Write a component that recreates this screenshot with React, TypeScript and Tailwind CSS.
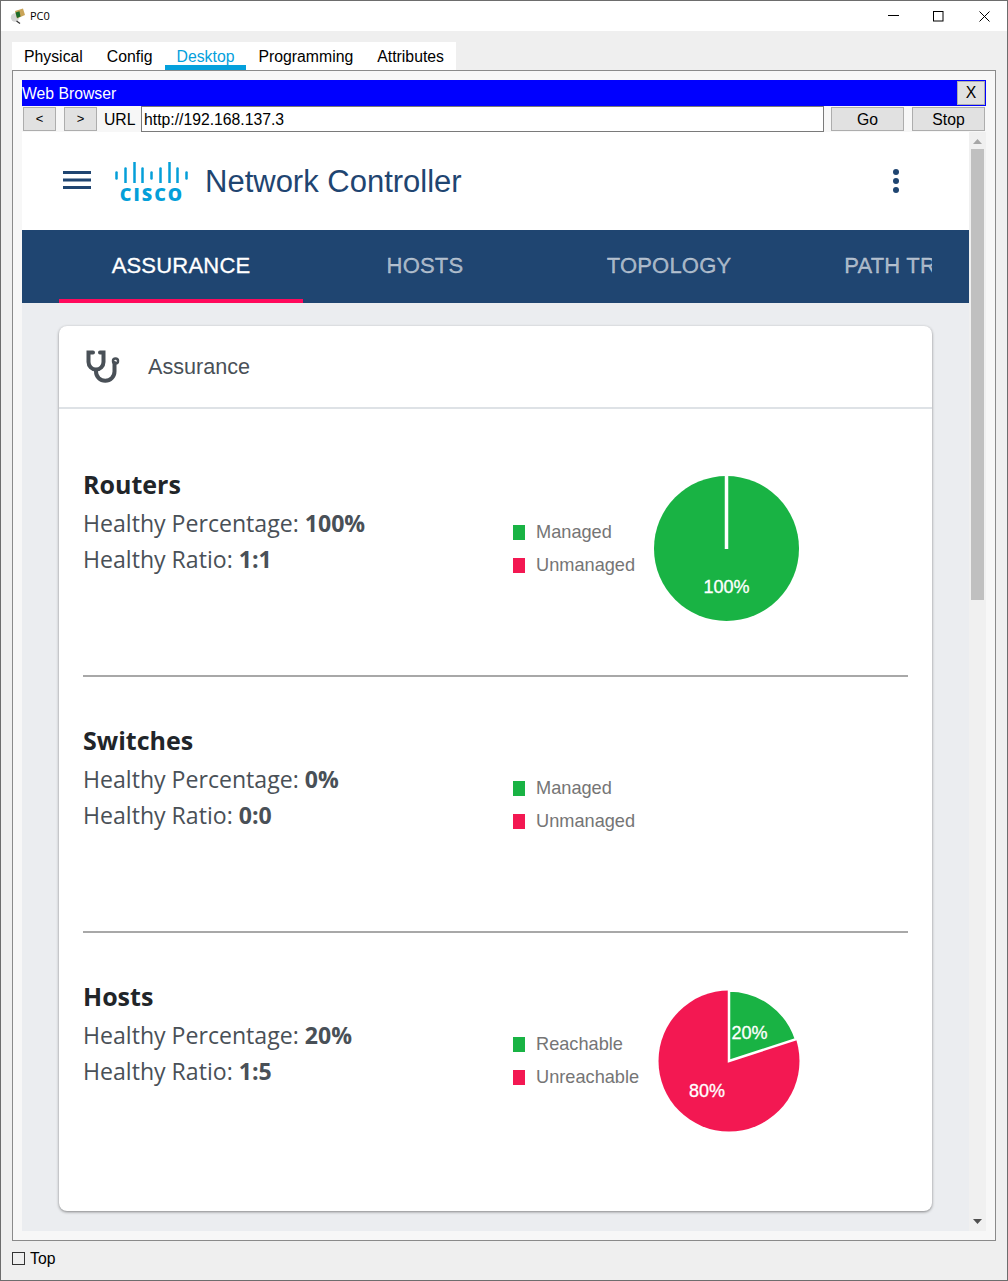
import type { ReactNode } from "react";

const tabs = ["Physical", "Config", "Desktop", "Programming", "Attributes"];
const navItems = ["ASSURANCE", "HOSTS", "TOPOLOGY", "PATH TRACE"];

function PcIcon() {
  return (
    <svg width="16" height="16" viewBox="0 0 16 16">
      <circle cx="5" cy="9.500" r="4.200" fill="#d4d4d4" />
      <path d="M6.500 13l3.500 2.500" stroke="#333" strokeWidth="1.200" />
      <path d="M5 3l8-2.500 2 6.500-8 3.500z" fill="#c9a458" />
      <path d="M5.500 4.500l4-1.200 1 5.200-3.500 1.500z" fill="#1c6b2a" />
    </svg>
  );
}

function CiscoLogo() {
  const bars = [
    [1.5, 172, 178],
    [10.5, 168, 182],
    [19.5, 162, 182],
    [27.5, 168, 182],
    [36.5, 172, 178],
    [45.5, 168, 182],
    [54.5, 162, 182],
    [62.5, 168, 182],
    [71.5, 172, 178],
  ];
  return (
    <div className="flex flex-col items-center w-[74px]">
      <svg width="74" height="21" viewBox="0 161.500 74 21">
        {bars.map(([x, y1, y2]) => (
          <line key={x} x1={x} x2={x} y1={y1} y2={y2} stroke="#049fd9" strokeWidth="2.500" strokeLinecap="round" />
        ))}
      </svg>
      <span className="mt-[3px] font-['Open_Sans',sans-serif] font-extrabold text-[18px] leading-[16px] tracking-[2px] text-[#049fd9]">
        CISCO
      </span>
    </div>
  );
}

function Stethoscope() {
  return (
    <svg width="36" height="36" viewBox="0 0 36 36" fill="none" stroke="#495057" strokeWidth="4" strokeLinecap="round">
      <path d="M8 3.500H3.500v9.500a7.500 7.500 0 0 0 15 0V3.500H15" />
      <path d="M11 21v1.500a9 9 0 0 0 18.500 0V14" />
      <circle cx="30.500" cy="12" r="2.500" strokeWidth="2.500" />
    </svg>
  );
}

function Legend({ on, off }: { on: string; off: string }) {
  return (
    <div className="w-[133px] pt-[95px] text-[18.200px] text-[#757575]">
      <div className="flex items-center h-[33px]">
        <span className="w-3 h-[15px] bg-[#19b344] mr-[11px]" />
        {on}
      </div>
      <div className="flex items-center h-[33px]">
        <span className="w-3 h-[15px] bg-[#f31852] mr-[11px]" />
        {off}
      </div>
    </div>
  );
}

function PieLabel({ x, y, children }: { x: number; y: number; children: ReactNode }) {
  return (
    <text x={x} y={y} textAnchor="middle" fill="#fff" stroke="#fff" strokeWidth="0.300" fontFamily="Liberation Sans" fontSize="18">
      {children}
    </text>
  );
}

function RoutersPie() {
  return (
    <div className="pt-[50px]">
      <svg width="162" height="160" viewBox="0 0 162 160">
        <circle cx="80.500" cy="77.500" r="72.500" fill="#19b344" />
        <line x1="80.500" x2="80.500" y1="5" y2="78" stroke="#fff" strokeWidth="3.500" />
        <PieLabel x={80.5} y={121.5}>100%</PieLabel>
      </svg>
    </div>
  );
}

function HostsPie() {
  return (
    <div className="pt-[50px]">
      <svg width="162" height="160" viewBox="0 0 162 160">
        <circle cx="83" cy="78" r="70.500" fill="#f31852" />
        <path d="M83 78V7.500A70.500 70.500 0 0 1 150 56.200Z" fill="#19b344" stroke="#fff" strokeWidth="2.500" />
        <PieLabel x={103.5} y={56}>20%</PieLabel>
        <PieLabel x={61} y={114}>80%</PieLabel>
      </svg>
    </div>
  );
}

function Section({
  title,
  pct,
  ratio,
  on,
  off,
  pie,
  last,
}: {
  title: string;
  pct: string;
  ratio: string;
  on: string;
  off: string;
  pie?: ReactNode;
  last?: boolean;
}) {
  return (
    <div className={`h-[256px] flex ${last ? "" : "border-b-2 border-[#a8a8a8]"}`}>
      <div className="w-[430px] pt-[43px] font-['Open_Sans',sans-serif] text-[23.100px] leading-[36px] text-[#495057]">
        <h2 className="text-[25px] leading-[41px] font-bold text-[#212529]">{title}</h2>
        <div>
          Healthy Percentage: <b className="font-bold">{pct}</b>
        </div>
        <div>
          Healthy Ratio: <b className="font-bold">{ratio}</b>
        </div>
      </div>
      <Legend on={on} off={off} />
      {pie}
    </div>
  );
}

export default function App() {
  return (
    <div className="w-[1008px] h-[1281px] flex flex-col bg-[#efefef] border border-[#6d6d6d] overflow-hidden font-['Liberation_Sans',sans-serif] text-black">
      {/* title bar */}
      <div className="h-[30px] shrink-0 bg-white flex items-center pl-[9px]">
        <PcIcon />
        <span className="ml-[4px] text-[11px] font-['Open_Sans',sans-serif]">PC0</span>
        <div className="ml-auto flex items-center">
          <svg width="11" height="11" viewBox="0 0 11 11" className="mr-[34px]">
            <line x1="0" x2="11" y1="4.500" y2="4.500" stroke="#000" />
          </svg>
          <svg width="11" height="11" viewBox="0 0 11 11" className="mr-[35px]">
            <rect x="0.500" y="0.500" width="9.500" height="9.500" fill="none" stroke="#000" />
          </svg>
          <svg width="11" height="11" viewBox="0 0 11 11" className="mr-[17px]">
            <path d="M0.500 0.500l10 10M10.500 0.500l-10 10" stroke="#000" fill="none" />
          </svg>
        </div>
      </div>

      {/* device tabs */}
      <div className="pl-[11px] pt-[11px] shrink-0 flex">
        <div className="flex bg-white h-[28px] text-[15.800px]">
          {tabs.map((tab) => (
            <div
              key={tab}
              className={`px-3 flex items-center border-b-[5px] pt-[7px] ${
                tab === "Desktop" ? "border-[#04a0dc] text-[#04a0dc]" : "border-transparent"
              }`}
            >
              {tab}
            </div>
          ))}
        </div>
      </div>

      {/* desktop panel */}
      <div className="ml-[11px] mr-[11px] h-[1171px] shrink-0 border border-[#8a8a8a] bg-[#f7f7f7] p-[9px] flex flex-col text-[15.750px]">
        <div className="h-[26px] shrink-0 bg-[#0000ff] flex items-center justify-between text-white border-r border-[#0000ff] pt-px">
          Web Browser
          <div className="w-[28px] h-[24px] bg-[#e1e1e1] border border-[#adadad] text-black flex items-center justify-center -mt-px">
            X
          </div>
        </div>
        <div className="h-[26px] shrink-0 flex items-center pl-px pr-px">
          <button className="w-[33px] h-[24px] bg-[#e1e1e1] border border-[#adadad] text-[13px]">&lt;</button>
          <button className="ml-2 w-[33px] h-[24px] bg-[#e1e1e1] border border-[#adadad] text-[13px]">&gt;</button>
          <span className="ml-[7px] w-[37px] pt-px">URL</span>
          <div className="w-[683px] h-[26px] bg-white border border-[#7a7a7a] flex items-center pl-[2px] pt-px">
            http://192.168.137.3
          </div>
          <button className="ml-[7px] w-[73px] h-[24px] bg-[#e1e1e1] border border-[#adadad]">Go</button>
          <button className="ml-2 w-[73px] h-[24px] bg-[#e1e1e1] border border-[#adadad]">Stop</button>
        </div>

        {/* browser viewport */}
        <div className="flex-1 flex min-h-0">
          <div className="w-[947px] flex flex-col">
            <header className="h-[98px] shrink-0 bg-white flex items-center pl-[41px]">
              <svg width="28" height="20" viewBox="0 0 28 20">
                <rect y="0" width="28" height="3" fill="#1f4571" />
                <rect y="7.500" width="28" height="3" fill="#1f4571" />
                <rect y="15" width="28" height="3" fill="#1f4571" />
              </svg>
              <div className="ml-[24px] mt-[2px]">
                <CiscoLogo />
              </div>
              <span className="ml-4 pt-[2px] text-[31px] text-[#1f4571]">Network Controller</span>
              <svg width="8" height="26" viewBox="0 0 8 26" className="ml-[430px]">
                <circle cx="4" cy="4" r="3" fill="#1f4571" />
                <circle cx="4" cy="13" r="3" fill="#1f4571" />
                <circle cx="4" cy="22" r="3" fill="#1f4571" />
              </svg>
            </header>

            <nav className="h-[73px] shrink-0 bg-[#1f4571] pl-[37px] pr-[37px]">
              <div className="flex overflow-hidden h-full">
                {navItems.map((item, i) => (
                  <div
                    key={item}
                    className={`w-[244px] shrink-0 flex items-center justify-center whitespace-nowrap text-[22px] tracking-[0.200px] [-webkit-text-stroke:0.3px] border-b-4 pt-[2px] ${
                      i === 0 ? "border-[#ff0a5c] text-white" : "border-transparent text-white/60"
                    }`}
                  >
                    {item}
                  </div>
                ))}
              </div>
            </nav>

            <main className="flex-1 bg-[#ebedf0] pt-[23px] px-[37px]">
              <div className="bg-white rounded-lg shadow-[0_1px_3px_rgba(0,0,0,0.45)]">
                <div className="h-[83px] border-b-2 border-[#dee2e6] flex items-center pl-[26px]">
                  <Stethoscope />
                  <span className="ml-[27px] pt-[2px] text-[21.600px] text-[#495057]">Assurance</span>
                </div>
                <div className="px-6 pt-3 pb-[22px]">
                  <Section title="Routers" pct="100%" ratio="1:1" on="Managed" off="Unmanaged" pie={<RoutersPie />} />
                  <Section title="Switches" pct="0%" ratio="0:0" on="Managed" off="Unmanaged" />
                  <Section title="Hosts" pct="20%" ratio="1:5" on="Reachable" off="Unreachable" pie={<HostsPie />} last />
                </div>
              </div>
            </main>
          </div>

          {/* scrollbar */}
          <div className="w-[17px] bg-[#f0f0f0] flex flex-col items-center">
            <svg width="9" height="5" viewBox="0 0 9 5" className="mt-[7px]">
              <path d="M4.500 0L9 5H0z" fill="#a6a6a6" />
            </svg>
            <div className="mt-[5px] w-[13px] h-[451px] bg-[#c0c0c0]" />
            <svg width="9" height="5" viewBox="0 0 9 5" className="mt-auto mb-[7px]">
              <path d="M0 0h9L4.500 5z" fill="#505050" />
            </svg>
          </div>
        </div>
      </div>

      {/* footer */}
      <div className="flex items-center pl-[11px] pt-[6px] text-[15.750px]">
        <span className="w-[13px] h-[13px] border border-[#333]" />
        <span className="ml-[5px]">Top</span>
      </div>
    </div>
  );
}
